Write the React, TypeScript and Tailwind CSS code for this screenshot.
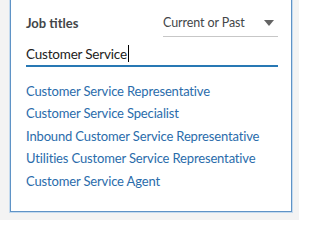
const suggestions = [
  "Customer Service Representative",
  "Customer Service Specialist",
  "Inbound Customer Service Representative",
  "Utilities Customer Service Representative",
  "Customer Service Agent",
];

export default function App() {
  return (
    <div className="h-[220px] w-[299px] overflow-hidden bg-[#f3f3f3] pl-[10px] font-['Lato',sans-serif]">
      <div className="-mt-px h-[213px] w-[282px] border border-[#5f93c6] bg-white shadow-[0_0_0_1px_#c4daee] pl-[15px] pr-[13px]">
        {/* Header row */}
        <div className="flex items-start justify-between pt-[14px]">
          <span className="text-[13px] font-bold text-[#434649]">Job titles</span>
          <button className="flex w-[115px] items-center justify-between border-b border-[#c7c7c7] pb-[3px] text-[12.5px] tracking-[-0.1px] text-[#434649]">
            Current or Past
            <svg width="10" height="6" viewBox="0 0 10 6" className="mr-[4px]">
              <path d="M0 0h10L5 6z" fill="#646464" />
            </svg>
          </button>
        </div>

        {/* Input */}
        <div className="mt-[6px] flex h-[24px] items-center border-b-2 border-[#2878b4] text-[13.5px] tracking-[-0.2px] text-[#222]">
          Customer Service
          <span className="ml-px h-[17px] w-px bg-black" />
        </div>

        {/* Suggestions */}
        <ul className="mt-[13px] flex flex-col">
          {suggestions.map((s) => (
            <li key={s} className="h-[22.5px] text-[13px] leading-[22.5px] tracking-[-0.15px] text-[#2a6cab]">
              {s}
            </li>
          ))}
        </ul>
      </div>
    </div>
  );
}
